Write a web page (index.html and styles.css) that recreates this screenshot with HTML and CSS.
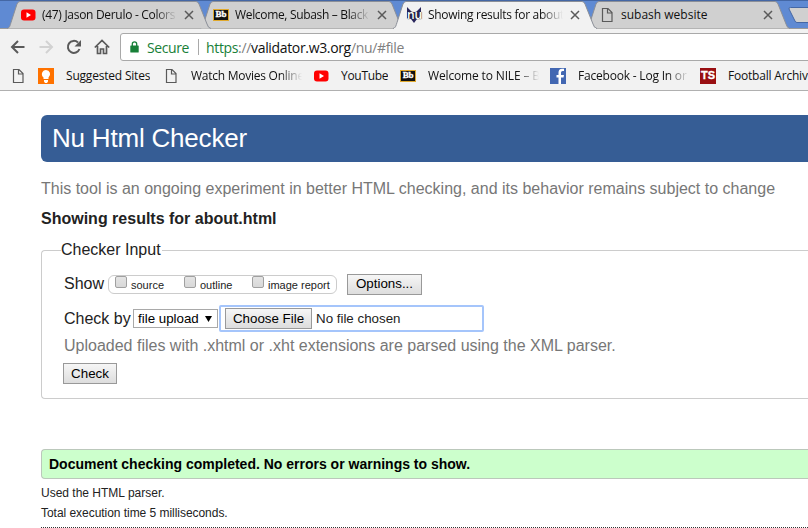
FILE: index.html
```html
<!DOCTYPE html>
<html lang="en">
<head>
<meta charset="utf-8">
<title>Showing results for about.html</title>
<link rel="stylesheet" href="styles.css">
</head>
<body>
<svg class="defs" width="0" height="0">
  <defs>
    <symbol id="page" viewBox="0 0 16 16"><path d="M3.500 1.500h5.500l4 4v9H3.500zM8.500 1.500v4.500h4.500" fill="none" stroke="#5a5a5a" stroke-width="1.200"/></symbol>
    <symbol id="yt" viewBox="0 0 16 16"><rect x="1" y="2.500" width="14.500" height="11" rx="3" fill="#f00"/><path d="M6.500 5.300v5.400L11 8z" fill="#fff"/></symbol>
    <symbol id="close" viewBox="0 0 10 10"><path d="M1 1l8 8M9 1L1 9" stroke="#5a5a5a" stroke-width="1.500"/></symbol>
    <symbol id="tab" viewBox="0 0 204 29"><path d="M0 28.500C3 28 3 25 4 22.500L10 4Q11 1.500 13 1.500H189Q191 1.500 192 4L200 24Q201 28 204 28.500" fill="currentColor" stroke="#8b8f98"/></symbol>
  </defs>
</svg>
<header class="browser">
  <div class="tabs">
    <div class="tab t1"><svg class="shape"><use href="#tab"/></svg><svg class="ico"><use href="#yt"/></svg><span class="label fade">(47) Jason Derulo - Colors</span><svg class="x"><use href="#close"/></svg></div>
    <div class="tab t2"><svg class="shape"><use href="#tab"/></svg><span class="ico bb">Bb</span><span class="label fade">Welcome, Subash – Black</span><svg class="x"><use href="#close"/></svg></div>
    <div class="tab t3"><svg class="shape"><use href="#tab"/></svg><span class="ico nu"><svg viewBox="0 0 16 16"><path d="M1 0l5 5h4l5-5v11l-4 1-3 4-3-4-4-1z" fill="#29265c"/></svg><b>nu</b></span><span class="label fade">Showing results for about</span><svg class="x"><use href="#close"/></svg></div>
    <div class="tab t4"><svg class="shape"><use href="#tab"/></svg><svg class="ico"><use href="#page"/></svg><span class="label">subash website</span><svg class="x"><use href="#close"/></svg></div>
    <svg class="newtab" viewBox="0 0 20 18"><path d="M22 .500H2.500Q.500.500 1 2L7 14Q7.500 15.500 9 15.500H22" fill="#d0d0d0" stroke="#4467a5"/></svg>
  </div>
  <div class="toolbar">
    <svg class="nav" viewBox="0 0 16 16"><path d="M14.500 8H2.500M8 2L2 8l6 6" fill="none" stroke="#5a5a5a" stroke-width="2"/></svg>
    <svg class="nav" viewBox="0 0 16 16"><path d="M1.500 8h12M8 2l6 6-6 6" fill="none" stroke="#d2d2d2" stroke-width="2"/></svg>
    <svg class="nav" viewBox="0 0 16 16"><path d="M13.500 10A6 6 0 1 1 12 3.500" fill="none" stroke="#5a5a5a" stroke-width="2"/><path d="M15 1v6.500H8.500z" fill="#5a5a5a"/></svg>
    <svg class="nav" viewBox="0 0 16 16"><path d="M.800 8.500L8 1.500l7.200 7M3.500 7v7.500h3V10h3v4.500h3V7" fill="none" stroke="#5a5a5a" stroke-width="1.700"/></svg>
    <div class="address">
      <svg class="lock" viewBox="0 0 9 12"><path d="M2.300 5V3a2.200 2.200 0 0 1 4.400 0v2" fill="none" stroke="#188038" stroke-width="1.300"/><rect x=".300" y="4.500" width="8.400" height="7" rx=".5" fill="#188038"/></svg>
      <span class="secure">Secure</span><i class="sep"></i>
      <span class="url"><em>https</em>://<b>validator.w3.org</b>/nu/#file</span>
    </div>
  </div>
  <nav class="bookmarks">
    <span class="bm b0"><svg class="ico"><use href="#page"/></svg></span>
    <span class="bm b1"><svg class="ico" viewBox="0 0 16 16"><path d="M0 0h16v16H0z" fill="#ff7200"/><path d="M8 2a4.200 4.200 0 0 0-2.500 7.500V11h5V9.500A4.200 4.200 0 0 0 8 2zM6 12h4v1.500L9 15H7l-1-1.500z" fill="#fff"/></svg><span class="label">Suggested Sites</span></span>
    <span class="bm b2"><svg class="ico"><use href="#page"/></svg><span class="label fade">Watch Movies Online</span></span>
    <span class="bm b3"><svg class="ico"><use href="#yt"/></svg><span class="label">YouTube</span></span>
    <span class="bm b4"><span class="ico bb">Bb</span><span class="label fade">Welcome to NILE – B</span></span>
    <span class="bm b5"><svg class="ico" viewBox="0 0 16 16"><path d="M0 0h16v16H0z" fill="#4267b2"/><path d="M14 3h-1.500Q11 3 11 4.500V7h3l-.5 2.500H11V16H8.500V9.500H6.500V7h2V4.500Q8.500.700 12 .700h2z" fill="#fff"/></svg><span class="label fade">Facebook - Log In or</span></span>
    <span class="bm b6"><span class="ico ts">TS</span><span class="label">Football Archiv</span></span>
  </nav>
</header>
<main>
  <h1>Nu Html Checker</h1>
  <p class="intro">This tool is an ongoing experiment in better HTML checking, and its behavior remains subject to change</p>
  <h2>Showing results for about.html</h2>
  <form>
    <fieldset>
      <legend>Checker Input</legend>
      <div class="row show"><span class="name">Show</span>
        <span class="options"><label><i class="check"></i>source</label><label><i class="check"></i>outline</label><label><i class="check"></i>image report</label></span>
        <button type="button" class="opt">Options...</button></div>
      <div class="row by"><span class="name">Check by</span>
        <span class="select">file upload<svg viewBox="0 0 7 6"><path d="M0 0h7L3.500 6z"/></svg></span>
        <span class="file"><button type="button" class="choose">Choose File</button><span>No file chosen</span></span></div>
      <p class="hint">Uploaded files with .xhtml or .xht extensions are parsed using the XML parser.</p>
      <button type="button" class="submit">Check</button>
    </fieldset>
  </form>
  <p class="success">Document checking completed. No errors or warnings to show.</p>
  <p class="detail">Used the HTML parser.</p>
  <p class="detail">Total execution time 5 milliseconds.</p>
  <hr>
</main>
</body>
</html>
```
FILE: styles.css
```css
* { box-sizing: border-box; }
body { margin: 0; width: 808px; height: 528px; overflow: hidden; background: #fff; color: #222; font: 16px "Liberation Sans", Arial, sans-serif; }
.defs { position: absolute; }
.browser { height: 91px; background: #f2f2f2; border-bottom: 1px solid #b0b0b0; font: 12px "Open Sans", "Noto Sans", sans-serif; color: #111; overflow: hidden; }
.tabs { display: flex; height: 29px; padding-left: 7px; background: #5f8ad3; border-top: 1px solid #4467a5; box-shadow: inset 0 -1px #999; }
.tab { position: relative; flex: none; display: flex; align-items: center; width: 204px; height: 29px; margin: -1px -11px 0 0; padding-left: 13px; color: #d0d0d0; }
.t1 { z-index: 3; }
.t2 { z-index: 2; }
.t3 { z-index: 4; color: #f2f2f2; }
.shape { position: absolute; left: 0; top: 0; width: 204px; height: 29px; }
.t3::after { content: ""; position: absolute; left: 1px; right: 1px; bottom: 0; height: 1px; background: #f2f2f2; }
.ico { position: relative; flex: none; width: 16px; height: 16px; }
.tab .label { position: relative; width: 135px; margin-left: 6px; color: #111; }
.t1 .label { letter-spacing: -0.3px; }
.t2 .label { letter-spacing: -0.33px; }
.t3 .label { letter-spacing: -0.3px; }
.label { white-space: nowrap; overflow: hidden; line-height: 18px; flex: none; }
.fade { -webkit-mask-image: linear-gradient(to left, transparent, #000 22px); mask-image: linear-gradient(to left, transparent, #000 22px); }
.x { position: relative; width: 10px; height: 10px; margin-left: 7px; }
.bb { height: 12px; background: #111; border: 1px solid #e0a92e; color: #fff; font: bold 9px/9px "Liberation Serif", serif; text-align: center; -webkit-text-stroke: .3px #fff; }
.nu svg { position: absolute; left: 0; top: 0; width: 16px; height: 16px; }
.nu b { position: absolute; left: 1px; top: 4px; font: 600 12px/8px "Open Sans", sans-serif; color: #fff; text-shadow: 0 0 1px #222, 0 0 1px #222; }
.newtab { width: 20px; height: 18px; margin: 6px -20px 0 9px; flex: none; }
.toolbar { display: flex; height: 34px; padding: 4px 0 0 10px; overflow: hidden; }
.nav { flex: none; width: 16px; height: 16px; margin: 6px 12px 0 0; }
.address { display: flex; align-items: center; flex: 1; height: 28px; margin: 0 -4px 0 -2px; padding-left: 9px; border: 1px solid #a9a9a9; border-radius: 3px; background: #fff; font-size: 14px; }
.lock { width: 9px; height: 12px; margin-right: 8px; }
.secure { width: 51px; color: #188038; letter-spacing: -0.4px; }
.sep { width: 1px; height: 16px; background: #a9a9a9; margin-right: 7px; }
.url { color: #808080; letter-spacing: -0.34px; }
.url em { font-style: normal; color: #188038; }
.url b { font-weight: normal; color: #111; }
.bookmarks { display: flex; align-items: center; height: 26px; padding-left: 10px; }
.bm { display: flex; align-items: center; flex: none; gap: 12px; }
.b0 { width: 28px; }
.b1 { width: 125px; letter-spacing: -0.2px; }
.b2 { width: 150px; letter-spacing: -0.25px; }
.b3 { width: 87px; letter-spacing: -0.3px; }
.b4 { width: 150px; letter-spacing: -0.15px; }
.b5 { width: 150px; letter-spacing: -0.2px; }
.b6 { letter-spacing: -0.2px; }
.b2 .label, .b4 .label, .b5 .label { width: 111px; }
.ts { background: #990f12; color: #fff; font: bold 11px/14px "Liberation Sans", sans-serif; text-align: center; letter-spacing: 0; -webkit-text-stroke: .3px #fff; }

main { width: 808px; height: 437px; overflow: hidden; padding: 24px 0 0 41px; }
h1 { height: 47px; margin: 0; padding-left: 11px; border-radius: 6px 0 0 6px; background: #365d95; color: #fff; font-weight: normal; font-size: 26px; line-height: 46px; letter-spacing: -0.2px; }
.intro { margin: 17px 0 0; line-height: 20px; color: #777; white-space: nowrap; }
h2 { margin: 10px 0 0; font-size: 16px; line-height: 20px; }
fieldset { height: 159px; margin: 11px 0 0; padding: 0 0 0 22px; border: 1px solid #ccc; border-right: 0; border-radius: 4px 0 0 4px; }
legend { margin-left: -3px; padding: 0 1px 0 0; line-height: 20px; }
.row { display: flex; align-items: center; }
.show { height: 22px; margin-top: 13px; }
.name { white-space: nowrap; }
.show .name { width: 44px; }
.options { display: flex; width: 229px; height: 19px; border: 1px solid #ccc; border-radius: 6px; padding-left: 6px; font-size: 11px; }
.options label { display: flex; width: 69px; line-height: 19px; white-space: nowrap; }
.options label:nth-child(2) { width: 68px; }
.check { flex: none; width: 12px; height: 12px; margin-right: 4px; border: 1px solid #a0a0a0; border-radius: 2px; background: linear-gradient(#e4e4e4, #d8d8d8); }
button { height: 21px; padding: 0; border: 1px solid #999; border-radius: 0; background: linear-gradient(#f6f6f6, #ddd); color: #000; font: 13.33px/18px "Liberation Sans", sans-serif; }
.opt { width: 75px; margin-left: 10px; }
.by { height: 27px; margin-top: 10px; }
.by .name { width: 69px; }
.select { display: flex; align-items: center; width: 85px; height: 19px; padding-left: 4px; border: 1px solid #a9a9a9; color: #000; font-size: 13.33px; white-space: nowrap; }
.select svg { width: 7px; height: 6px; margin-left: 6px; }
.file { display: flex; align-items: center; width: 265px; height: 27px; margin-left: 1px; padding-left: 4px; border: 2px solid #a5c5fb; border-radius: 2px; font-size: 13.33px; }
.choose { width: 87px; margin-right: 4px; }
.hint { margin: 4px 0 0; line-height: 20px; color: #777; }
.submit { display: block; width: 54px; margin: 7px 0 0 -1px; }
.success { height: 30px; margin: 50px 0 0; padding-left: 7px; border: 1px solid #bbc8bb; border-right: 0; border-radius: 4px 0 0 4px; background: #cfc; color: #000; font-weight: bold; font-size: 14px; line-height: 28px; }
.detail { margin: 4px 0 0; font-size: 12px; line-height: 20px; }
.detail + .detail { margin-top: 0; letter-spacing: -0.04px; }
hr { margin: 4px 0 0; border: 0; border-top: 1px dotted #333; }
```
